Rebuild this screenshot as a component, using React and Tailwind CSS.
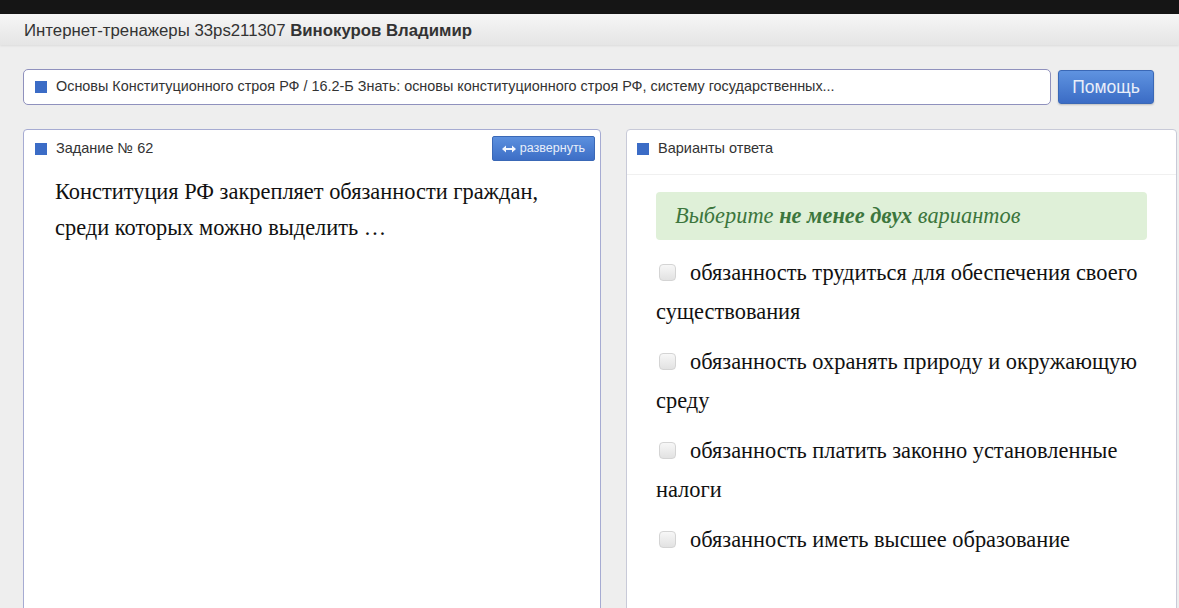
import React from 'react';

const Square = () => <span className="inline-block w-[12px] h-[12px] bg-[#3b6cc6] shrink-0" />;

const Check = () => (
  <span className="inline-block w-[17px] h-[17px] rounded-[4px] border border-[#d4d4d4] bg-gradient-to-b from-[#f7f7f7] to-[#e2e2e2] align-[-1px] mr-[14px] ml-[3px]" />
);

const options = [
  'обязанность трудиться для обеспечения своего существования',
  'обязанность охранять природу и окружающую среду',
  'обязанность платить законно установленные налоги',
  'обязанность иметь высшее образование',
];

export default function App() {
  return (
    <div className="min-h-[608px] h-[608px] overflow-hidden bg-[#eeeeee] font-['Liberation_Sans',Arial,sans-serif] text-[#333]">
      <div className="h-[14px] bg-[#151515]" />
      <div className="h-[31px] bg-gradient-to-b from-[#f6f6f6] to-[#e5e5e5] shadow-[0_1px_2px_rgba(0,0,0,0.08)] flex items-center px-[24px] pt-[2px] text-[16.8px] text-[#333]">
        Интернет-тренажеры 33ps211307&nbsp;<b>Винокуров Владимир</b>
      </div>

      <div className="flex gap-[7px] pl-[23px] pr-[25px] pt-[24px]">
        <div className="flex-1 h-[36px] bg-white border border-[#8f91bd] rounded-[5px] flex items-center gap-[9px] pl-[11px] text-[14.4px] text-[#333]">
          <Square />
          <span>Основы Конституционного строя РФ / 16.2-Б Знать: основы конституционного строя РФ, систему государственных...</span>
        </div>
        <button className="w-[96px] h-[34px] mt-px rounded-[3px] border border-[#3a68b6] bg-gradient-to-b from-[#5f93e0] to-[#3b6cc5] text-[#e9eef9] text-[17.5px] shadow-[0_1px_2px_rgba(0,0,0,0.2)]">
          Помощь
        </button>
      </div>

      <div className="flex gap-[25px] pl-[23px] pr-[2px] pt-[24px]">
        <div className="w-[578px] h-[500px] bg-white border border-[#a6abd2] rounded-t-[4px]">
          <div className="h-[37px] flex items-center pl-[11px] pr-[5px] gap-[9px] text-[14.5px]">
            <Square />
            <span className="flex-1">Задание № 62</span>
            <button className="w-[103px] h-[25px] rounded-[2px] bg-gradient-to-b from-[#5c90de] to-[#3d6ec6] border border-[#3a68b6] text-[#e8eefa] text-[12.5px] flex items-center justify-center gap-[4px]">
              <svg width="14" height="8" viewBox="0 0 14 8" fill="#f4f7fd">
                <path d="M0 4 L4 0.5 V3 H10 V0.5 L14 4 L10 7.5 V5 H4 V7.5 Z" />
              </svg>
              развернуть
            </button>
          </div>
          <p className="pl-[31px] pr-[40px] pt-[7px] font-['Liberation_Serif','Times_New_Roman',serif] text-[22.4px] leading-[36px] text-[#111]">
            Конституция РФ закрепляет обязанности граждан, среди которых можно выделить …
          </p>
        </div>

        <div className="flex-1 h-[500px] bg-white border border-[#c8cad8] rounded-t-[4px]">
          <div className="h-[45px] flex items-center pl-[10px] gap-[9px] text-[14.5px] border-b border-[#f0f0f0] pb-[7px]">
            <Square />
            <span>Варианты ответа</span>
          </div>
          <div className="px-[29px] pt-[17px] font-['Liberation_Serif','Times_New_Roman',serif] text-[#111]">
            <div className="h-[48px] rounded-[4px] bg-[#dff0d8] text-[#3c763d] italic text-[22.4px] flex items-center pl-[19px]">
              Выберите&nbsp;<b>не менее двух</b>&nbsp;вариантов
            </div>
            <div className="pt-[13px] flex flex-col gap-[11px]">
              {options.map((o) => (
                <div key={o} className="text-[22.4px] leading-[39px]">
                  <Check />
                  {o}
                </div>
              ))}
            </div>
          </div>
        </div>
      </div>
    </div>
  );
}
